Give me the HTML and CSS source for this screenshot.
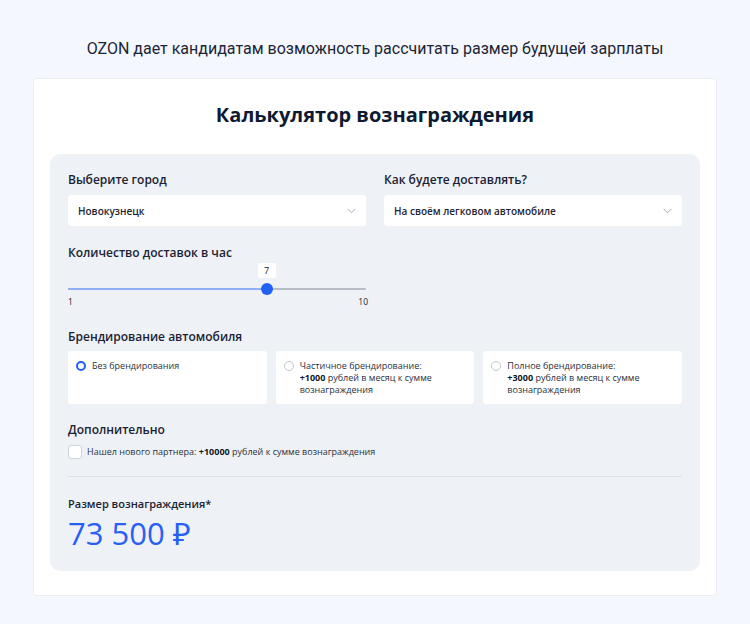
FILE: index.html
```html
<!DOCTYPE html>
<html lang="ru">
<head>
<meta charset="utf-8">
<link rel="stylesheet" href="styles.css">
</head>
<body>
<p class="lead">OZON дает кандидатам возможность рассчитать размер будущей зарплаты</p>
<div class="card">
  <h1 class="title">Калькулятор вознаграждения</h1>
  <div class="panel">
    <div class="row2">
      <div class="field">
        <div class="label">Выберите город</div>
        <div class="select"><span>Новокузнецк</span>
          <svg class="chev" width="9" height="6" viewBox="0 0 9 6"><path d="M0.5 0.8 L4.5 4.8 L8.5 0.8" fill="none" stroke="#a9afb9" stroke-width="1"/></svg>
        </div>
      </div>
      <div class="field">
        <div class="label">Как будете доставлять?</div>
        <div class="select"><span>На своём легковом автомобиле</span>
          <svg class="chev" width="9" height="6" viewBox="0 0 9 6"><path d="M0.5 0.8 L4.5 4.8 L8.5 0.8" fill="none" stroke="#a9afb9" stroke-width="1"/></svg>
        </div>
      </div>
    </div>

    <div class="label l-count">Количество доставок в час</div>
    <div class="slider">
      <div class="track">
        <div class="fill" style="width: 66.67%"></div>
        <div class="tip" style="left: 66.67%">7</div>
        <div class="thumb" style="left: 66.67%"></div>
      </div>
      <div class="ends"><span>1</span><span>10</span></div>
    </div>

    <div class="label l-brand">Брендирование автомобиля</div>
    <div class="options">
      <div class="opt">
        <span class="radio on"></span>
        <span class="opt-text">Без брендирования</span>
      </div>
      <div class="opt">
        <span class="radio"></span>
        <span class="opt-text"><span class="ln">Частичное брендирование:</span><span class="ln"><b>+1000</b> рублей в месяц к сумме</span><span class="ln">вознаграждения</span></span>
      </div>
      <div class="opt">
        <span class="radio"></span>
        <span class="opt-text"><span class="ln">Полное брендирование:</span><span class="ln"><b>+3000</b> рублей в месяц к сумме</span><span class="ln">вознаграждения</span></span>
      </div>
    </div>

    <div class="label l-extra">Дополнительно</div>
    <div class="check">
      <span class="box"></span>
      <span class="check-text">Нашел нового партнера: <b>+10000</b> рублей к сумме вознаграждения</span>
    </div>

    <div class="divider"></div>

    <div class="sum-label">Размер вознаграждения*</div>
    <div class="sum">73 500 ₽</div>
  </div>
</div>
</body>
</html>
```
FILE: styles.css
```css
* { box-sizing: border-box; }
html, body { margin: 0; padding: 0; }
body {
  background: #f4f7fd;
  font-family: "Open Sans", "Noto Sans", sans-serif;
  color: #1b2233;
  width: 750px;
  height: 624px;
  overflow: hidden;
}
.lead {
  margin: 0;
  padding-top: 38px;
  height: 78px;
  text-align: center;
  font-family: Roboto, "Liberation Sans", sans-serif;
  font-size: 16px;
  line-height: 22px;
  color: #1c2536;
}
.card {
  margin: 0 33px;
  height: 518px;
  background: #fff;
  border: 1px solid #ebedf0;
  border-radius: 4px;
  padding: 22px 16px 0;
}
.title {
  margin: 0 0 25px;
  text-align: center;
  font-size: 20px;
  line-height: 28px;
  font-weight: 700;
  color: #0e1a30;
}
.panel {
  background: #eef2f6;
  border-radius: 10px;
  height: 417px;
  padding: 18px 18px 0;
}
.row2 {
  display: grid;
  grid-template-columns: 298px 298px;
  gap: 18px;
}
.label {
  font-size: 12px;
  line-height: 16px;
  font-weight: 600;
  color: #1b2233;
}
.field .label { margin-bottom: 7px; }
.select {
  height: 31px;
  background: #fff;
  border-radius: 3px;
  display: flex;
  align-items: center;
  justify-content: space-between;
  padding: 0 10px;
  font-size: 10px;
  font-weight: 600;
  color: #1f2433;
}
.l-count { margin-top: 19px; }
.slider { margin-top: 27px; width: 298px; }
.track {
  position: relative;
  height: 2px;
  background: #b8bcc4;
  border-radius: 1px;
}
.fill {
  height: 2px;
  background: #8eb0f8;
  border-radius: 1px;
}
.thumb {
  position: absolute;
  top: -5px;
  width: 12px;
  height: 12px;
  margin-left: -6px;
  border-radius: 50%;
  background: #2160f4;
}
.tip {
  position: absolute;
  top: -25px;
  width: 18px;
  height: 15px;
  margin-left: -9px;
  background: #fff;
  border-radius: 2px;
  font-size: 9px;
  line-height: 15px;
  text-align: center;
  color: #1b2233;
}
.ends {
  display: flex;
  justify-content: space-between;
  width: 300px;
  margin-top: 6px;
  font-size: 8.5px;
  line-height: 12px;
  color: #1b2233;
}
.l-brand { margin-top: 21px; }
.options {
  margin-top: 6px;
  display: grid;
  grid-template-columns: repeat(3, 1fr);
  gap: 9px;
}
.opt {
  height: 53px;
  background: #fff;
  border-radius: 3px;
  padding: 9px 10px 0 8px;
  display: flex;
  align-items: flex-start;
  gap: 6px;
}
.radio {
  flex: none;
  width: 10px;
  height: 10px;
  margin-top: 1px;
  border-radius: 50%;
  border: 1px solid #c3c7ce;
  background: #fff;
}
.radio.on { border: 2.5px solid #2160f4; }
.opt-text {
  font-size: 9px;
  line-height: 12px;
  color: #2a3140;
}
.ln { display: block; white-space: nowrap; }
.opt-text b, .check-text b { color: #111827; font-weight: 700; }
.l-extra { margin-top: 18px; }
.check {
  margin-top: 7px;
  display: flex;
  align-items: center;
  gap: 5px;
}
.box {
  width: 14px;
  height: 14px;
  border: 1px solid #cfd3da;
  border-radius: 3px;
  background: #fff;
}
.check-text {
  font-size: 9px;
  line-height: 12px;
  color: #2a3140;
}
.divider {
  margin-top: 17px;
  height: 1px;
  background: #dde1e6;
}
.sum-label {
  margin-top: 19px;
  font-size: 11px;
  line-height: 15px;
  font-weight: 600;
  color: #1b2233;
}
.sum {
  margin-top: 4px;
  font-size: 31px;
  line-height: 36px;
  color: #2a5ff6;
  font-weight: 400;
}
```
